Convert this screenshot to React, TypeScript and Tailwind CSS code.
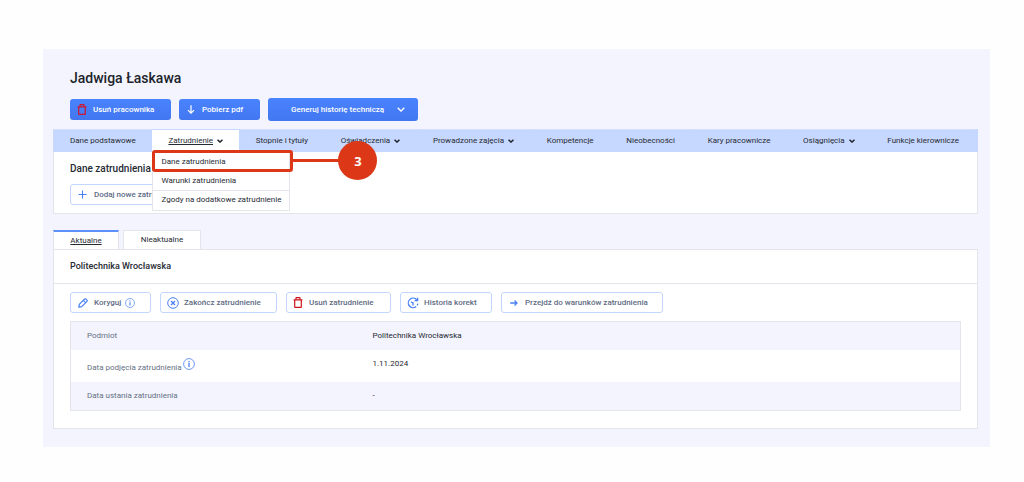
import type { ReactNode } from "react";

type IconProps = { className?: string };

function TrashIcon({ className = "" }: IconProps) {
  return (
    <svg viewBox="0 0 10 11" className={`h-[11px] w-[10px] shrink-0 ${className}`} fill="none" stroke="currentColor" strokeWidth="1.2" aria-hidden="true">
      <path d="M0.6 2.8H9.4M3 2.6V1Q3 0.7 3.4 0.7H6.6Q7 0.7 7 1V2.6M1.7 3V9.9Q1.7 10.4 2.2 10.4H7.8Q8.3 10.4 8.3 9.9V3" />
    </svg>
  );
}

function DownArrowIcon() {
  return (
    <svg viewBox="0 0 8 9" className="h-[9px] w-2 shrink-0" fill="none" stroke="currentColor" strokeWidth="1.2" aria-hidden="true">
      <path d="M4 0.3V8M1 5.2L4 8.2L7 5.2" />
    </svg>
  );
}

function ChevronIcon({ className = "" }: IconProps) {
  return (
    <svg viewBox="0 0 8 5" className={`shrink-0 ${className}`} fill="none" stroke="currentColor" aria-hidden="true">
      <path d="M0.7 0.8L4 4L7.3 0.8" />
    </svg>
  );
}

function PlusIcon() {
  return (
    <svg viewBox="0 0 9 9" className="h-[9px] w-[9px] shrink-0 text-[#4a80f7]" fill="none" stroke="currentColor" strokeWidth="1.1" aria-hidden="true">
      <path d="M4.5 0.5V8.5M0.5 4.5H8.5" />
    </svg>
  );
}

function PencilIcon() {
  return (
    <svg viewBox="0 0 10 10" className="h-[10px] w-[10px] shrink-0 text-[#4a80f7]" fill="none" stroke="currentColor" strokeWidth="1.2" strokeLinejoin="round" aria-hidden="true">
      <path d="M0.8 9.2L1.3 6.3L6.6 1Q7.2 0.5 7.8 1L9 2.2Q9.5 2.8 9 3.4L3.7 8.7ZM5.3 2.4L7.6 4.7" />
    </svg>
  );
}

function CircleXIcon() {
  return (
    <svg viewBox="0 0 12 12" className="h-3 w-3 shrink-0 text-[#4a80f7]" fill="none" stroke="currentColor" strokeWidth="1" aria-hidden="true">
      <circle cx="6" cy="6" r="5.3" />
      <path d="M4 4L8 8M8 4L4 8" strokeWidth="1.3" />
    </svg>
  );
}

function HistoryIcon() {
  return (
    <svg viewBox="0 0 12 12" className="h-3 w-3 shrink-0 text-[#4a80f7]" fill="none" stroke="currentColor" strokeWidth="1.3" aria-hidden="true">
      <path d="M9.8 2.8A4.8 4.8 0 1 0 9.2 9.6" />
      <path d="M10.6 0.8V3.7H7.6M3.8 5L6 5.8V8.4" />
      <path d="M10.3 8.4L10.8 6.6" />
    </svg>
  );
}

function RightArrowIcon() {
  return (
    <svg viewBox="0 0 8 8" className="h-2 w-2 shrink-0 text-[#4a80f7]" fill="none" stroke="currentColor" strokeWidth="1.3" aria-hidden="true">
      <path d="M0.2 4H7M4.5 1.5L7 4L4.5 6.5" />
    </svg>
  );
}

function InfoIcon({ className = "" }: IconProps) {
  return (
    <svg viewBox="0 0 12 12" className={`shrink-0 text-[#4a80f7] ${className}`} fill="none" stroke="currentColor" aria-hidden="true">
      <circle cx="6" cy="6" r="5.4" strokeWidth="0.8" />
      <path d="M6 5V9M6 3V4.2" strokeWidth="1.3" />
    </svg>
  );
}

function OutlineButton({ icon, children, className = "" }: { icon: ReactNode; children: ReactNode; className?: string }) {
  return (
    <button type="button" className={`flex h-[21px] items-center rounded-[3px] border border-[#c3d6ff] bg-white font-medium text-[#5e6b84] ${className}`}>
      {icon}
      {children}
    </button>
  );
}

const navItems = [
  { label: "Dane podstawowe" },
  { label: "Zatrudnienie", menu: true, active: true },
  { label: "Stopnie i tytuły" },
  { label: "Oświadczenia", menu: true },
  { label: "Prowadzone zajęcia", menu: true },
  { label: "Kompetencje" },
  { label: "Nieobecności" },
  { label: "Kary pracownicze" },
  { label: "Osiągnięcia", menu: true },
  { label: "Funkcje kierownicze" },
];

function EmploymentMenu() {
  return (
    <div className="absolute top-full left-0 z-10 w-[138px] border border-[#e4e5ea] bg-white">
      <a href="#dane" className="block h-[19px] px-2 leading-[17px]">Dane zatrudnienia</a>
      <a href="#warunki" className="block h-[19px] border-b border-[#e4e5ea] px-2 leading-[18px]">Warunki zatrudnienia</a>
      <a href="#zgody" className="block h-[19px] px-2 leading-[18px] whitespace-nowrap">Zgody na dodatkowe zatrudnienie</a>
      <div className="pointer-events-none absolute -top-3 -left-px flex items-center">
        <div className="h-[22px] w-[141px] rounded-[3px] border-3 border-[#dc3716]" />
        <div className="h-[3px] w-[46px] bg-[#dc3716]" />
        <div className="-ml-px flex h-[39px] w-[39px] items-center justify-center rounded-full bg-[#dc3716] font-['Open_Sans',sans-serif] text-[13px] font-bold text-white">3</div>
      </div>
    </div>
  );
}

export default function App() {
  return (
    <div className="bg-[#fefefe] pt-[49px] pr-[34px] pb-[35px] pl-[43px] font-[Roboto,sans-serif] text-[8px] leading-3 text-[#262a33]">
      <main className="bg-[#f3f4fd] pt-[21px] pr-3 pb-[18px] pl-[10px]">
        <h1 className="pl-[17px] text-[14px] leading-4 font-medium text-[#20232b]">Jadwiga Łaskawa</h1>

        <div className="mt-3 flex items-center gap-2 pl-[17px] font-medium text-white">
          <button type="button" className="flex h-[21px] w-[101px] items-center gap-[6px] rounded-[3px] bg-linear-to-b from-[#4a83ff] to-[#4277f0] pl-[7px]">
            <TrashIcon className="text-[#d0142c]" />
            Usuń pracownika
          </button>
          <button type="button" className="flex h-[21px] w-[81px] items-center gap-[7px] rounded-[3px] bg-linear-to-b from-[#4a83ff] to-[#4277f0] pl-2">
            <DownArrowIcon />
            Pobierz pdf
          </button>
          <button type="button" className="flex h-[23px] w-[150px] items-center justify-between rounded-[3px] bg-linear-to-b from-[#4a83ff] to-[#4277f0] pr-[13px] pl-[23px]">
            Generuj historię techniczą
            <ChevronIcon className="h-[5px] w-2 stroke-[1.3]" />
          </button>
        </div>

        <section className="mt-2">
          <nav className="flex h-[23px] items-stretch justify-between bg-[#c6d8ff] pr-[3px] pl-px">
            {navItems.map((item) => (
              <div key={item.label} className={item.active ? "relative flex border-t border-[#c6d8ff] bg-white" : "flex border-t border-[#d3e0fc]"}>
                <a href="#sekcja" className="flex items-center gap-1 px-4 whitespace-nowrap">
                  <span className={item.active ? "underline" : ""}>{item.label}</span>
                  {item.menu && <ChevronIcon className="h-1 w-[6px] stroke-2" />}
                </a>
                {item.active && <EmploymentMenu />}
              </div>
            ))}
          </nav>
          <div className="border border-t-0 border-[#e4e5ea] bg-white px-4 pt-[11px] pb-2">
            <h2 className="text-[10px] leading-3 font-medium">Dane zatrudnienia</h2>
            <div className="mt-[9px] flex">
              <OutlineButton icon={<PlusIcon />} className="gap-[7px] pr-4 pl-[7px]">Dodaj nowe zatrudnienie</OutlineButton>
            </div>
          </div>
        </section>

        <section className="mt-4">
          <div role="tablist" className="flex gap-1">
            <button type="button" role="tab" aria-selected="true" className="h-[19px] w-[66px] border-x border-t-2 border-x-[#e4e5ea] border-t-[#5f90fa] bg-white underline">Aktualne</button>
            <button type="button" role="tab" aria-selected="false" className="h-[19px] w-[78px] border border-b-0 border-[#e4e5ea] bg-white">Nieaktualne</button>
          </div>
          <div className="border border-[#e4e5ea] bg-white">
            <h2 className="border-b border-[#e4e5ea] px-4 pt-[10px] pb-[11px] text-[9px] leading-3 font-medium">Politechnika Wrocławska</h2>
            <div className="px-4 pt-2 pb-[17px]">
              <div className="flex gap-[9px]">
                <OutlineButton icon={<PencilIcon />} className="w-[81px] gap-[6px] pl-[7px]">
                  <span className="flex items-center gap-1">
                    Koryguj
                    <InfoIcon className="h-[10px] w-[10px]" />
                  </span>
                </OutlineButton>
                <OutlineButton icon={<CircleXIcon />} className="w-[117px] gap-[5px] pl-[6px]">Zakończ zatrudnienie</OutlineButton>
                <OutlineButton icon={<TrashIcon className="text-[#d0141c]" />} className="w-[105px] gap-[6px] pl-[6px]">Usuń zatrudnienie</OutlineButton>
                <OutlineButton icon={<HistoryIcon />} className="w-[92px] gap-[5px] pl-[6px]">Historia korekt</OutlineButton>
                <OutlineButton icon={<RightArrowIcon />} className="w-[162px] gap-[7px] pl-2">Przejdź do warunków zatrudnienia</OutlineButton>
              </div>
              <table className="mt-2 w-full border-separate border-spacing-0 border border-[#e4e5ea] text-left">
                <tbody>
                  <tr className="h-7 bg-[#f3f4fd]">
                    <th scope="row" className="w-[32%] pl-4 font-normal text-[#667085]">Podmiot</th>
                    <td className="pl-[17px]">Politechnika Wrocławska</td>
                  </tr>
                  <tr className="h-8">
                    <th scope="row" className="pb-[2px] pl-4 font-normal text-[#667085]">
                      <span className="flex items-end gap-px">
                        <span className="pt-[5px]">Data podjęcia zatrudnienia</span>
                        <InfoIcon className="mb-1 h-3 w-3" />
                      </span>
                    </th>
                    <td className="pb-1 pl-[17px]">1.11.2024</td>
                  </tr>
                  <tr className="h-7 bg-[#f3f4fd]">
                    <th scope="row" className="pl-4 font-normal text-[#667085]">Data ustania zatrudnienia</th>
                    <td className="pl-[17px]">-</td>
                  </tr>
                </tbody>
              </table>
            </div>
          </div>
        </section>
      </main>
    </div>
  );
}
